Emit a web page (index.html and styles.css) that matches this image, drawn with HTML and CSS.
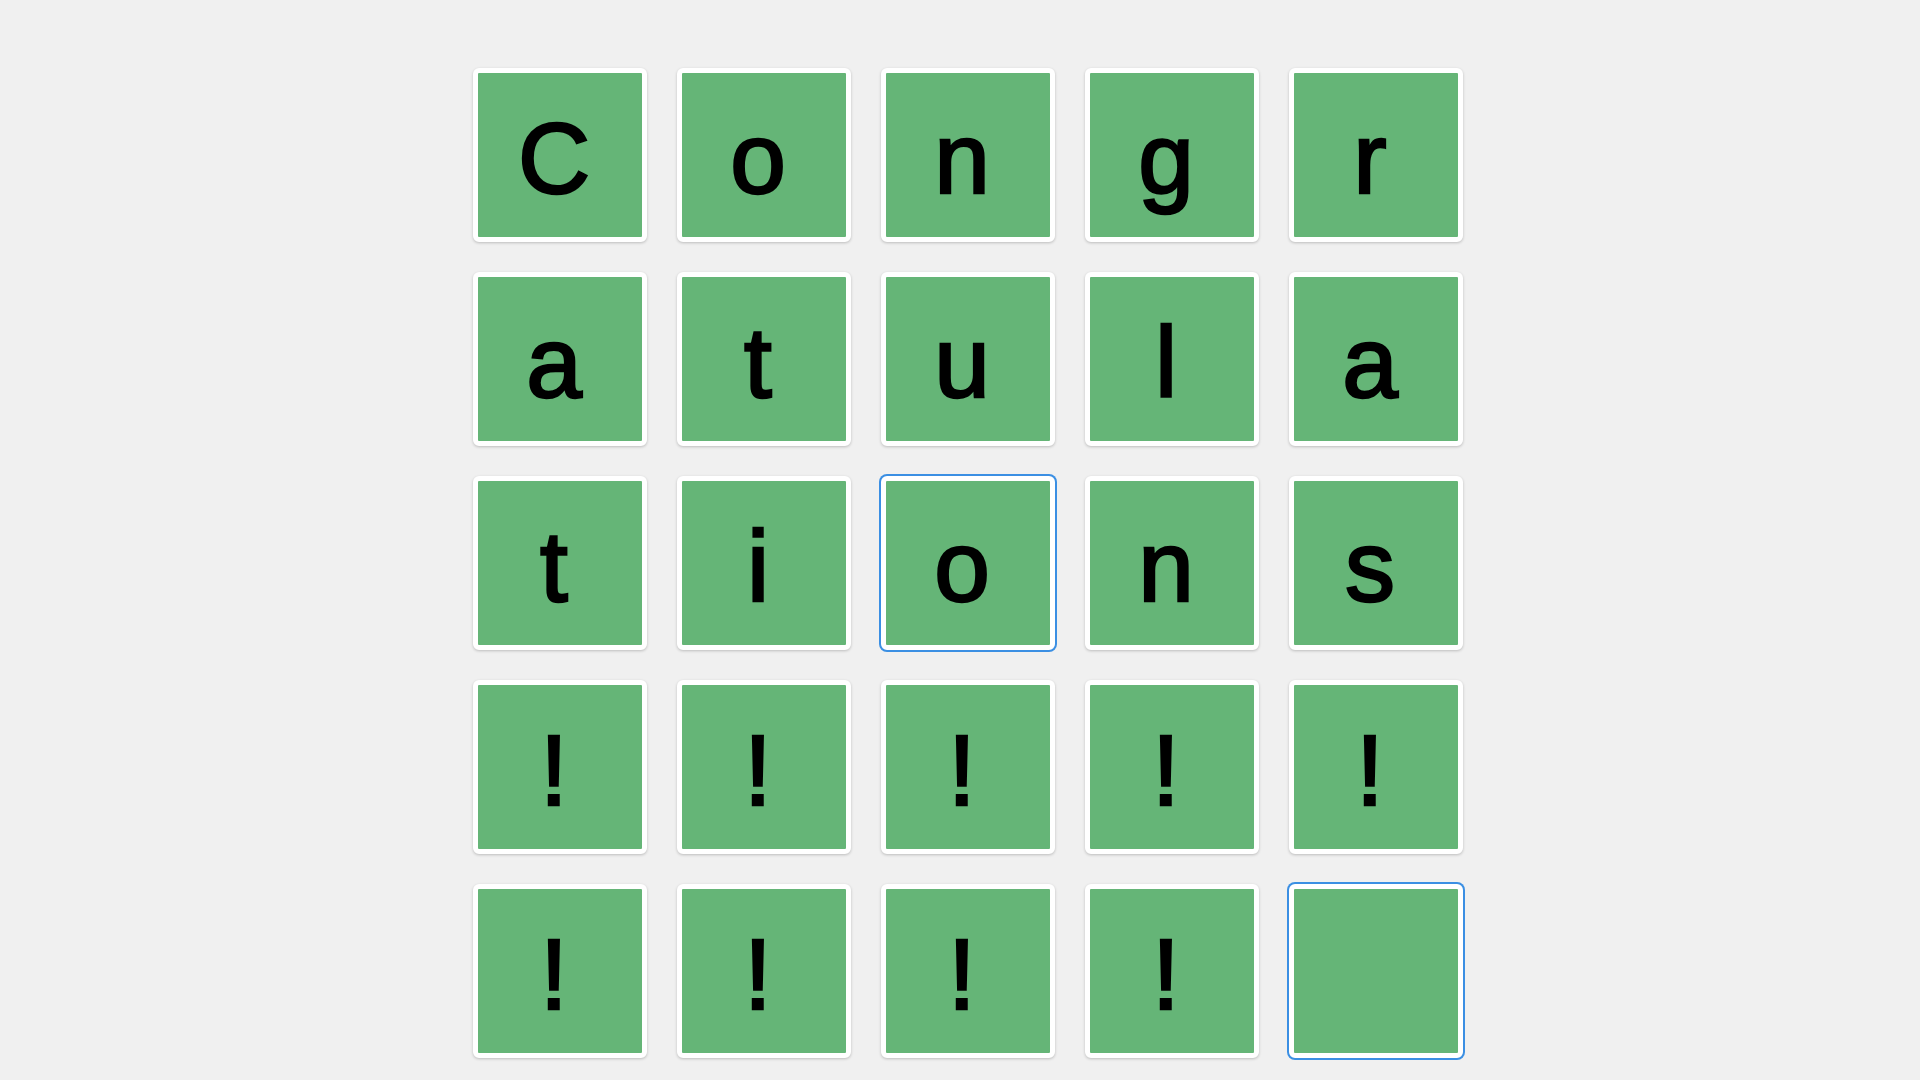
FILE: index.html
```html
<!DOCTYPE html>
<html lang="en">
<head>
<meta charset="utf-8">
<title>Congratulations</title>
<link rel="stylesheet" href="styles.css">
</head>
<body>
<main class="board">
  <div class="tile">C</div>
  <div class="tile">o</div>
  <div class="tile">n</div>
  <div class="tile">g</div>
  <div class="tile">r</div>
  <div class="tile">a</div>
  <div class="tile">t</div>
  <div class="tile">u</div>
  <div class="tile">l</div>
  <div class="tile">a</div>
  <div class="tile">t</div>
  <div class="tile">i</div>
  <div class="tile tile--selected">o</div>
  <div class="tile">n</div>
  <div class="tile">s</div>
  <div class="tile">!</div>
  <div class="tile">!</div>
  <div class="tile">!</div>
  <div class="tile">!</div>
  <div class="tile">!</div>
  <div class="tile">!</div>
  <div class="tile">!</div>
  <div class="tile">!</div>
  <div class="tile">!</div>
  <div class="tile tile--selected"></div>
</main>
</body>
</html>
```
FILE: styles.css
```css
html, body {
  margin: 0;
  padding: 0;
  background: #f0f0f0;
  height: 100%;
  overflow: hidden;
}

.board {
  display: grid;
  grid-template-columns: repeat(5, 174px);
  grid-auto-rows: 174px;
  gap: 30px;
  width: 990px;
  margin: 68px 0 0 473px;
}

.tile {
  box-sizing: border-box;
  border: 5px solid #ffffff;
  border-radius: 6px;
  background: #65b577;
  box-shadow: 0 1px 3px rgba(0, 0, 0, 0.22);
  display: flex;
  align-items: center;
  justify-content: center;
  padding: 5px 12px 0 0;
  font-family: "Liberation Sans", Arial, sans-serif;
  font-weight: 400;
  font-size: 100px;
  line-height: 1;
  color: #000000;
  -webkit-text-stroke: 2.5px #000000;
}

.tile--selected {
  box-shadow: 0 0 0 2px #3b8fe3;
}
```
